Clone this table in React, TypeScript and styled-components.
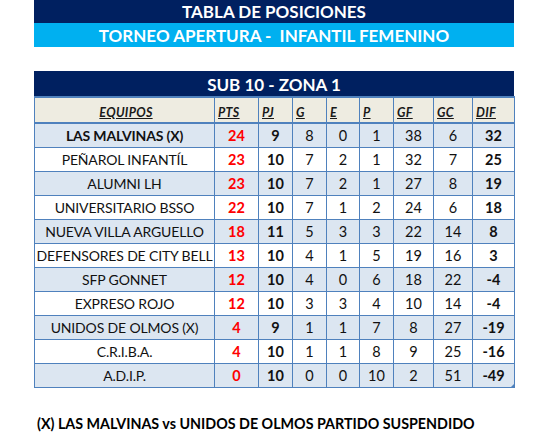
import React from "react";
import styled, { createGlobalStyle } from "styled-components";

const GlobalStyle = createGlobalStyle`
  body {
    margin: 0;
    background: #ffffff;
    font-family: "Lato", "Open Sans", sans-serif;
  }
`;

const Page = styled.div`
  width: 541px;
  height: 441px;
  padding-left: 34px;
  box-sizing: border-box;
  overflow: hidden;
`;

const Band = styled.div<{ $bg: string }>`
  width: 480px;
  height: ${(p) => (p.$bg === "#00b0f0" ? 24 : 23)}px;
  background: ${(p) => p.$bg};
  color: #ffffff;
  font-weight: 700;
  font-size: 17px;
  display: flex;
  align-items: center;
  justify-content: center;
  white-space: pre;
`;

const ZoneTitle = styled.div`
  margin-top: 24px;
  width: 480px;
  height: 25px;
  background: #002060;
  color: #ffffff;
  font-weight: 700;
  font-size: 17px;
  display: flex;
  align-items: center;
  justify-content: center;
  padding-top: 2px;
  box-sizing: border-box;
`;

const TableWrap = styled.div`
  position: relative;
  width: 480px;
`;

const Table = styled.table`
  width: 480px;
  border-collapse: collapse;
  table-layout: fixed;
  font-size: 14.5px;
  color: #111111;
`;

const HeadCell = styled.th<{ $center?: boolean }>`
  height: 22px;
  padding: 0 0 2px 3px;
  background: #eeece1;
  border: 1px solid #4f81bd;
  border-top-width: 2px;
  border-bottom-width: 2px;
  font-size: 12.5px;
  letter-spacing: 0.3px;
  font-style: italic;
  font-weight: 700;
  text-decoration: underline;
  text-align: ${(p) => (p.$center ? "center" : "left")};
  vertical-align: bottom;
  color: #1a1a1a;
`;

const Row = styled.tr<{ $shaded: boolean }>`
  background: ${(p) => (p.$shaded ? "#dce6f1" : "#ffffff")};
`;

const Cell = styled.td<{ $bold?: boolean; $red?: boolean }>`
  height: 23px;
  padding: 0;
  border: 1px solid #4f81bd;
  text-align: center;
  vertical-align: middle;
  white-space: nowrap;
  font-weight: ${(p) => (p.$bold ? 700 : 400)};
  color: ${(p) => (p.$red ? "#ff0000" : "#111111")};
`;

const TeamCell = styled(Cell)`
  font-size: 14px;
  letter-spacing: -0.15px;
`;

const Handle = styled.div`
  position: absolute;
  right: 0;
  bottom: 0;
  width: 0;
  height: 0;
  border-left: 4px solid transparent;
  border-bottom: 4px solid #4f81bd;
`;

const Note = styled.div`
  margin-top: 27px;
  padding-left: 3px;
  font-weight: 700;
  font-size: 14.3px;
  color: #000000;
`;

type Team = {
  name: string;
  pts: number;
  pj: number;
  g: number;
  e: number;
  p: number;
  gf: number;
  gc: number;
  dif: number;
  bold?: boolean;
};

const teams: Team[] = [
  { name: "LAS MALVINAS (X)", pts: 24, pj: 9, g: 8, e: 0, p: 1, gf: 38, gc: 6, dif: 32, bold: true },
  { name: "PEÑAROL INFANTÍL", pts: 23, pj: 10, g: 7, e: 2, p: 1, gf: 32, gc: 7, dif: 25 },
  { name: "ALUMNI LH", pts: 23, pj: 10, g: 7, e: 2, p: 1, gf: 27, gc: 8, dif: 19 },
  { name: "UNIVERSITARIO BSSO", pts: 22, pj: 10, g: 7, e: 1, p: 2, gf: 24, gc: 6, dif: 18 },
  { name: "NUEVA VILLA ARGUELLO", pts: 18, pj: 11, g: 5, e: 3, p: 3, gf: 22, gc: 14, dif: 8 },
  { name: "DEFENSORES DE CITY BELL", pts: 13, pj: 10, g: 4, e: 1, p: 5, gf: 19, gc: 16, dif: 3 },
  { name: "SFP GONNET", pts: 12, pj: 10, g: 4, e: 0, p: 6, gf: 18, gc: 22, dif: -4 },
  { name: "EXPRESO ROJO", pts: 12, pj: 10, g: 3, e: 3, p: 4, gf: 10, gc: 14, dif: -4 },
  { name: "UNIDOS DE OLMOS (X)", pts: 4, pj: 9, g: 1, e: 1, p: 7, gf: 8, gc: 27, dif: -19 },
  { name: "C.R.I.B.A.", pts: 4, pj: 10, g: 1, e: 1, p: 8, gf: 9, gc: 25, dif: -16 },
  { name: "A.D.I.P.", pts: 0, pj: 10, g: 0, e: 0, p: 10, gf: 2, gc: 51, dif: -49 },
];

const columns = [
  { label: "EQUIPOS", width: 180 },
  { label: "PTS", width: 44 },
  { label: "PJ", width: 34 },
  { label: "G", width: 34 },
  { label: "E", width: 33 },
  { label: "P", width: 34 },
  { label: "GF", width: 40 },
  { label: "GC", width: 39 },
  { label: "DIF", width: 42 },
];

export default function App() {
  return (
    <Page>
      <GlobalStyle />
      <Band $bg="#002060">TABLA DE POSICIONES</Band>
      <Band $bg="#00b0f0">{"TORNEO APERTURA -  INFANTIL FEMENINO"}</Band>
      <ZoneTitle>SUB 10 - ZONA 1</ZoneTitle>
      <TableWrap>
        <Table>
          <colgroup>
            {columns.map((c) => (
              <col key={c.label} style={{ width: c.width }} />
            ))}
          </colgroup>
          <thead>
            <tr>
              {columns.map((c, i) => (
                <HeadCell key={c.label} $center={i === 0}>
                  {c.label}
                </HeadCell>
              ))}
            </tr>
          </thead>
          <tbody>
            {teams.map((t, i) => (
              <Row key={t.name} $shaded={i % 2 === 0}>
                <TeamCell $bold={t.bold}>{t.name}</TeamCell>
                <Cell $bold $red>{t.pts}</Cell>
                <Cell $bold>{t.pj}</Cell>
                <Cell>{t.g}</Cell>
                <Cell>{t.e}</Cell>
                <Cell>{t.p}</Cell>
                <Cell>{t.gf}</Cell>
                <Cell>{t.gc}</Cell>
                <Cell $bold>{t.dif}</Cell>
              </Row>
            ))}
          </tbody>
        </Table>
        <Handle />
      </TableWrap>
      <Note>(X) LAS MALVINAS vs UNIDOS DE OLMOS PARTIDO SUSPENDIDO</Note>
    </Page>
  );
}
